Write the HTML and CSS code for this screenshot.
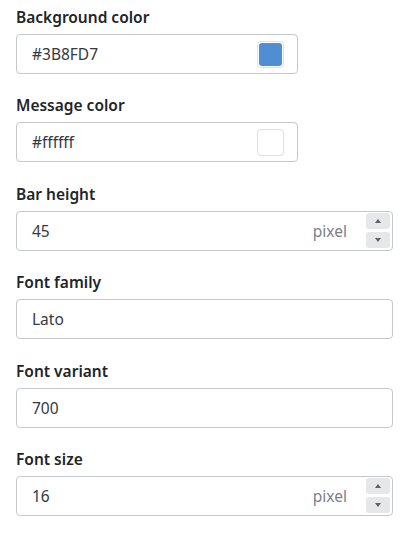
FILE: index.html
```html
<!DOCTYPE html>
<html>
<head>
<meta charset="utf-8">
<link rel="stylesheet" href="styles.css">
</head>
<body>
<div class="form">
  <div class="group">
    <label class="label">Background color</label>
    <div class="field field-color">
      <span class="value">#3B8FD7</span>
      <span class="swatch"><span class="swatch-fill swatch-blue"></span></span>
    </div>
  </div>
  <div class="group">
    <label class="label">Message color</label>
    <div class="field field-color">
      <span class="value">#ffffff</span>
      <span class="swatch"><span class="swatch-fill swatch-white"></span></span>
    </div>
  </div>
  <div class="group">
    <label class="label">Bar height</label>
    <div class="field field-number">
      <span class="value">45</span>
      <span class="unit">pixel</span>
      <span class="spin">
        <span class="spin-btn"><span class="tri tri-up"></span></span>
        <span class="spin-btn"><span class="tri tri-down"></span></span>
      </span>
    </div>
  </div>
  <div class="group">
    <label class="label">Font family</label>
    <div class="field field-wide">
      <span class="value">Lato</span>
    </div>
  </div>
  <div class="group">
    <label class="label">Font variant</label>
    <div class="field field-wide">
      <span class="value">700</span>
    </div>
  </div>
  <div class="group">
    <label class="label">Font size</label>
    <div class="field field-number">
      <span class="value">16</span>
      <span class="unit">pixel</span>
      <span class="spin">
        <span class="spin-btn"><span class="tri tri-up"></span></span>
        <span class="spin-btn"><span class="tri tri-down"></span></span>
      </span>
    </div>
  </div>
</div>
</body>
</html>
```
FILE: styles.css
```css
* { box-sizing: border-box; }
html, body { margin: 0; padding: 0; background: #ffffff; }
body {
  font-family: "Noto Sans", "Open Sans", sans-serif;
  color: #212529;
}
.form {
  padding: 5px 15px 0 16px;
  display: flex;
  flex-direction: column;
}
.group {
  display: flex;
  flex-direction: column;
  margin-bottom: 19.4px;
}
.label {
  font-size: 15.5px;
  font-weight: 600;
  line-height: 24px;
  height: 24px;
  margin-bottom: 5px;
  color: #212529;
}
.field {
  height: 40px;
  border: 1px solid #c4c8cc;
  border-radius: 4px;
  display: flex;
  align-items: center;
  padding: 0 0 0 15px;
  font-size: 15.5px;
  color: #333a40;
}
.field-color { width: 282px; padding-right: 13px; }
.field-wide { width: 377px; }
.field-number { width: 377px; padding-right: 2px; }
.value { flex: 1; }
.swatch {
  width: 27px;
  height: 27px;
  border: 1px solid #dcdfe3;
  border-radius: 4px;
  padding: 1px;
  display: flex;
}
.swatch-fill { flex: 1; border-radius: 3px; }
.swatch-blue { background: #4f8ed3; }
.swatch-white { background: #ffffff; }
.unit {
  color: #7b8188;
  margin-right: 19px;
}
.spin {
  display: flex;
  flex-direction: column;
  gap: 3px;
  width: 24px;
}
.spin-btn {
  height: 16px;
  background: #e6e7e9;
  border-radius: 3px;
  display: flex;
  align-items: center;
  justify-content: center;
}
.tri { width: 0; height: 0; border-left: 3px solid transparent; border-right: 3px solid transparent; }
.tri-up { border-bottom: 4px solid #5c6166; }
.tri-down { border-top: 4px solid #5c6166; }
```
